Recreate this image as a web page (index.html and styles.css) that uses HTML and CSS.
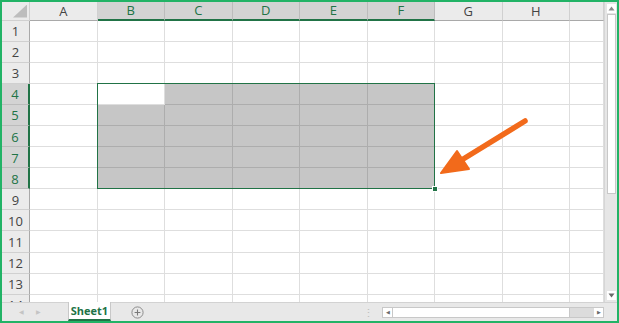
FILE: index.html
```html
<!DOCTYPE html>
<html lang="en">
<head>
    <meta charset="UTF-8">
    <title>Sheet1 - Excel</title>
    <link rel="stylesheet" href="styles.css">
</head>
<body>

<div class="excel">
    <div class="workarea">
        <div class="sheetwrap">
            <div class="sheet" id="sheet"></div>
            <div class="sheet overlay">
                <div class="selection"><span class="handle"></span></div>
            </div>
        </div>

        <div class="vscroll">
            <div class="vbtn">
                <svg width="7" height="5" viewBox="0 0 7 5"><polygon points="3.5,0.5 6.5,4.5 0.5,4.5" fill="#8a8a8a"/></svg>
            </div>
            <div class="vthumb"></div>
            <div class="vtrack"></div>
            <div class="vbtn">
                <svg width="7" height="5" viewBox="0 0 7 5"><polygon points="0.5,0.5 6.5,0.5 3.5,4.5" fill="#6a6a6a"/></svg>
            </div>
        </div>

        <svg class="pointer" viewBox="0 0 615 300">
            <line x1="523" y1="119" x2="458" y2="159" stroke="#f26a1b" stroke-width="5.5" stroke-linecap="round"/>
            <polygon points="439,171 455,149 467,167" fill="#f26a1b" stroke="#f26a1b" stroke-width="2" stroke-linejoin="round"/>
        </svg>
    </div>

    <div class="tabbar">
        <div class="tabnav">
            <span class="nav">&#9664;</span>
            <span class="nav">&#9654;</span>
        </div>
        <div class="tab">Sheet1</div>
        <div class="addsheet">
            <svg width="13" height="13" viewBox="0 0 13 13">
                <circle cx="6.5" cy="6.5" r="5.6" fill="none" stroke="#8c8c8c" stroke-width="1"/>
                <path d="M6.5 3.6v5.8M3.6 6.5h5.8" stroke="#7a7a7a" stroke-width="1.1"/>
            </svg>
        </div>
        <div class="spacer"></div>
        <div class="splitter">&#8942;</div>
        <div class="hscroll">
            <div class="hbtn">&#9664;</div>
            <div class="hthumb"></div>
            <div class="htrack"></div>
            <div class="hbtn">&#9654;</div>
        </div>
    </div>
</div>

<script>
const cols = ["A", "B", "C", "D", "E", "F", "G", "H", "I"];
const sheet = document.getElementById("sheet");

function inSel(r, c) {
    return r >= 4 && r <= 8 && c >= 1 && c <= 5;
}

function addCell(cls, text) {
    const el = document.createElement("div");
    el.className = cls;
    if (text) el.textContent = text;
    sheet.appendChild(el);
}

// header row
addCell("hd corner");
cols.forEach((letter, c) => {
    addCell("hd colhd" + (c >= 1 && c <= 5 ? " on" : ""), letter === "I" ? "" : letter);
});

// rows 1..14
for (let r = 1; r <= 14; r++) {
    addCell("hd rowhd" + (r >= 4 && r <= 8 ? " on" : ""), String(r));
    cols.forEach((letter, c) => {
        let cls = "cell";
        if (inSel(r, c)) cls += (r === 4 && c === 1) ? " active" : " sel";
        addCell(cls);
    });
}
</script>

</body>
</html>
```

FILE: styles.css
```css
body {
    margin: 0;
    background: #fff;
    font-family: "Open Sans", "Noto Sans", sans-serif;
}

.excel {
    width: 619px;
    height: 323px;
    box-sizing: border-box;
    border: 2px solid #22b366;
    display: flex;
    flex-direction: column;
    background: #fff;
}

.workarea {
    height: 300px;
    display: grid;
    grid-template-columns: 1fr 13px;
    position: relative;
}

.sheetwrap {
    display: grid;
    overflow: hidden;
}

.sheet {
    grid-area: 1 / 1;
    display: grid;
    grid-template-columns: 28px repeat(8, 67.5px) 1fr;
    grid-template-rows: 18.5px repeat(14, 21.1px);
}

.overlay {
    pointer-events: none;
}

.cell {
    box-sizing: border-box;
    border-right: 1px solid #dedede;
    border-bottom: 1px solid #dedede;
}

.cell.sel {
    background: #c6c6c6;
    border-color: #adadad;
}

.cell.active {
    background: #fff;
}

.hd {
    box-sizing: border-box;
    background: #ebebeb;
    border-right: 1px solid #d0d0d0;
    border-bottom: 1px solid #d0d0d0;
    color: #444;
    font-size: 13px;
    display: flex;
    align-items: center;
    justify-content: center;
    overflow: hidden;
}

.colhd {
    border-bottom: 1px solid #a9a9a9;
}

.rowhd {
    border-right: 1px solid #a9a9a9;
    padding-top: 1px;
}

.hd.on {
    background: #d3d3d3;
    color: #217346;
    border-color: #bcbcbc;
}

.colhd.on {
    border-bottom: 2px solid #217346;
}

.rowhd.on {
    border-right: 2px solid #217346;
}

.corner {
    position: relative;
}

.corner::after {
    content: "";
    position: absolute;
    right: 2px;
    bottom: 2px;
    width: 14px;
    height: 13px;
    background: #bdbdbd;
    clip-path: polygon(100% 0, 100% 100%, 0 100%);
}

.selection {
    grid-column: 3 / 8;
    grid-row: 5 / 10;
    margin: -1px 0 0 -1px;
    border: 1.5px solid #217346;
    position: relative;
}

.handle {
    position: absolute;
    right: -4px;
    bottom: -4px;
    width: 4px;
    height: 4px;
    background: #217346;
    border: 1px solid #fff;
}

.pointer {
    position: absolute;
    left: 0;
    top: 0;
    width: 615px;
    height: 300px;
    pointer-events: none;
}

.vscroll {
    background: #e6e6e6;
    border-left: 1px solid #d6d6d6;
    display: flex;
    flex-direction: column;
    padding: 2px 1px 2px 2px;
}

.vbtn {
    height: 9px;
    background: #fff;
    display: flex;
    align-items: center;
    justify-content: center;
}

.vthumb {
    height: 180px;
    background: #fff;
    border: 1px solid #c8c8c8;
    box-sizing: border-box;
    margin-top: 1px;
}

.vtrack {
    flex: 1;
}

.tabbar {
    flex: 1;
    display: flex;
    align-items: stretch;
    background: #e8e8e8;
    border-top: 1px solid #d2d2d2;
}

.tabnav {
    width: 66px;
    display: flex;
    align-items: center;
    gap: 12px;
    padding-left: 17px;
    box-sizing: border-box;
}

.nav {
    color: #c4c4c4;
    font-size: 6px;
}

.tab {
    width: 43px;
    margin-top: -1px;
    background: #fff;
    border-left: 1px solid #c8c8c8;
    border-right: 1px solid #c8c8c8;
    border-bottom: 2px solid #217346;
    box-sizing: border-box;
    color: #217346;
    font-size: 11px;
    font-weight: bold;
    display: flex;
    align-items: center;
    justify-content: center;
}

.addsheet {
    margin-left: 20px;
    display: flex;
    align-items: center;
}

.spacer {
    flex: 1;
}

.splitter {
    color: #bdbdbd;
    font-size: 11px;
    display: flex;
    align-items: center;
    margin-right: 8px;
}

.hscroll {
    width: 222px;
    height: 11px;
    align-self: center;
    margin-right: 13px;
    display: flex;
    background: #dcdcdc;
    border: 1px solid #c8c8c8;
    box-sizing: border-box;
}

.hbtn {
    width: 9px;
    background: #fff;
    color: #6a6a6a;
    font-size: 5px;
    display: flex;
    align-items: center;
    justify-content: center;
}

.hthumb {
    width: 176px;
    background: #fff;
    border-left: 1px solid #c8c8c8;
    border-right: 1px solid #c8c8c8;
}

.htrack {
    flex: 1;
}
```
